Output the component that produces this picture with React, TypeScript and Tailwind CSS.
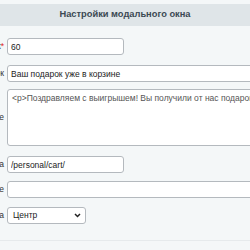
import React from "react";

function Label({ text, req }: { text: string; req?: boolean }) {
    return (
        <div className="w-[200px] -ml-[193px] shrink-0 pr-[3px] text-right text-[8.5px] leading-[11px] text-[#333]">
            {text}
            {req && <span className="text-[#e02020]">*</span>}
        </div>
    );
}

const field =
    "h-[17px] rounded-[3px] border border-[#b4b9be] bg-white px-[3px] text-[8.5px] text-[#222] outline-none";

export default function App() {
    return (
        <div className="w-[250px] h-[250px] overflow-hidden bg-[#f4f7f8] font-['Liberation_Sans',Arial,sans-serif]">
            <div className="pt-1 pb-3">
                <div className="h-[22px] flex items-center justify-center bg-[#dfe5e8] text-[9.3px] font-bold text-[#3b4953]">
                    Настройки модального окна
                </div>
            </div>

            <div className="flex flex-col border-b border-[#e6eaec] pb-4">
                <div className="flex items-center">
                    <Label text="Задержка показа, сек" req />
                    <input defaultValue="60" className={`w-[117px] ${field}`} />
                </div>

                <div className="flex items-center mt-[10px]">
                    <Label text="Заголовок" />
                    <input defaultValue="Ваш подарок уже в корзине" className={`w-[400px] shrink-0 ${field}`} />
                </div>

                <div className="flex items-center mt-[7px]">
                    <Label text="Текст в окне" />
                    <textarea
                        defaultValue="<p>Поздравляем с выигрышем! Вы получили от нас подарок</p>"
                        className="w-[400px] shrink-0 h-[57px] resize-none rounded-[3px] border border-[#b4b9be] bg-white px-[4px] py-[3px] text-[8.5px] leading-[11px] text-[#555] outline-none whitespace-nowrap overflow-hidden"
                    />
                </div>

                <div className="flex items-center mt-[10px]">
                    <Label text="Ссылка" />
                    <input defaultValue="/personal/cart/" className={`w-[117px] ${field}`} />
                </div>

                <div className="flex items-center mt-[8px]">
                    <Label text="Текст на кнопке" />
                    <input defaultValue="" className={`w-[400px] shrink-0 ${field}`} />
                </div>

                <div className="flex items-center mt-[9px]">
                    <Label text="Позиция окна" />
                    <div className="relative w-[79px] h-[17px] rounded-[3px] border border-[#b4b9be] bg-white flex items-center pl-[5px] text-[8.5px] text-[#222]">
                        Центр
                        <svg className="absolute right-[4px] top-[5px]" width="7" height="5" viewBox="0 0 7 5">
                            <path d="M1 1 L3.5 3.5 L6 1" fill="none" stroke="#222" strokeWidth="1.5" />
                        </svg>
                    </div>
                </div>
            </div>
        </div>
    );
}
